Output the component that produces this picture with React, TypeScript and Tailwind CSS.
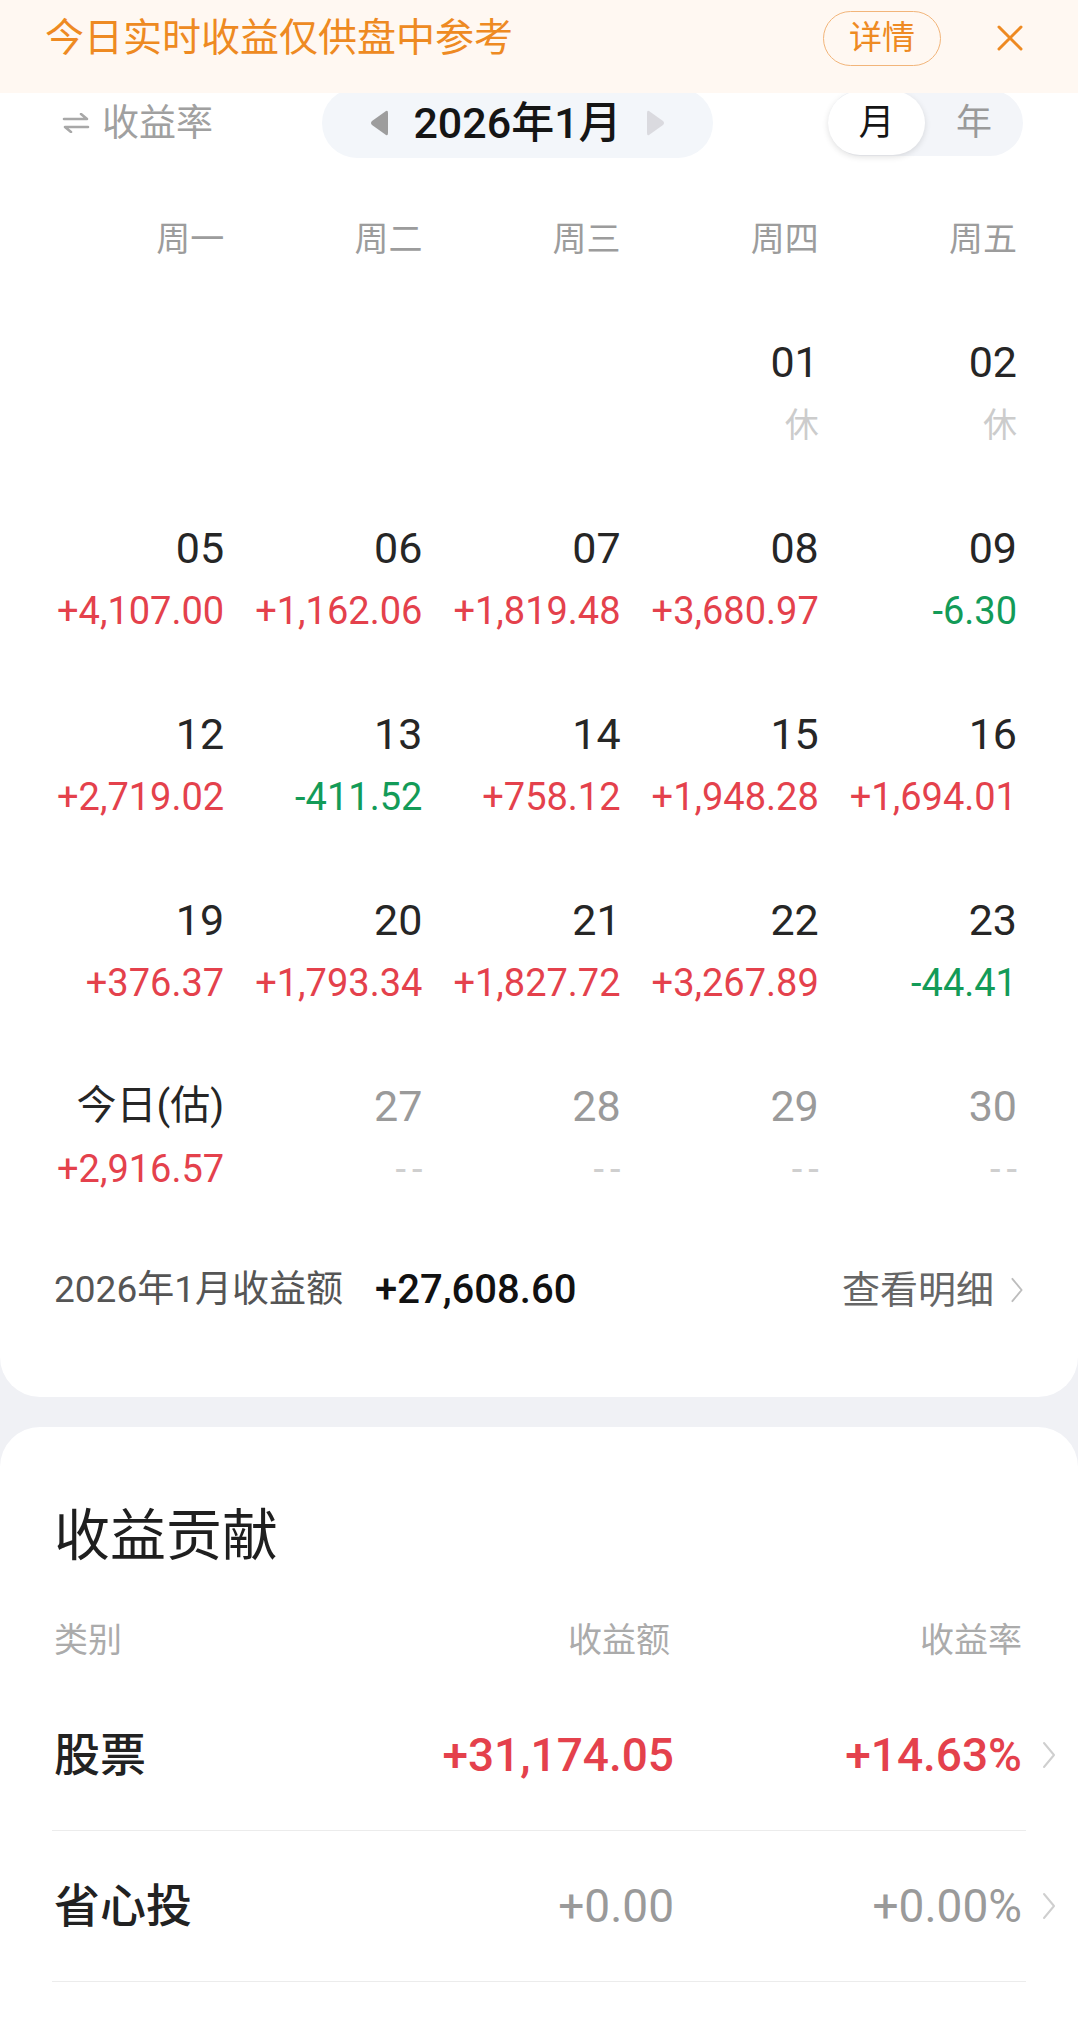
type Cell = { d: string; v?: string; tone: 'up' | 'down' | 'rest' | 'future' | 'today' } | null;

const weeks = ['周一', '周二', '周三', '周四', '周五'];

const rows: Cell[][] = [
  [null, null, null, { d: '01', v: '休', tone: 'rest' }, { d: '02', v: '休', tone: 'rest' }],
  [
    { d: '05', v: '+4,107.00', tone: 'up' },
    { d: '06', v: '+1,162.06', tone: 'up' },
    { d: '07', v: '+1,819.48', tone: 'up' },
    { d: '08', v: '+3,680.97', tone: 'up' },
    { d: '09', v: '-6.30', tone: 'down' },
  ],
  [
    { d: '12', v: '+2,719.02', tone: 'up' },
    { d: '13', v: '-411.52', tone: 'down' },
    { d: '14', v: '+758.12', tone: 'up' },
    { d: '15', v: '+1,948.28', tone: 'up' },
    { d: '16', v: '+1,694.01', tone: 'up' },
  ],
  [
    { d: '19', v: '+376.37', tone: 'up' },
    { d: '20', v: '+1,793.34', tone: 'up' },
    { d: '21', v: '+1,827.72', tone: 'up' },
    { d: '22', v: '+3,267.89', tone: 'up' },
    { d: '23', v: '-44.41', tone: 'down' },
  ],
  [
    { d: '今日(估)', v: '+2,916.57', tone: 'today' },
    { d: '27', v: '--', tone: 'future' },
    { d: '28', v: '--', tone: 'future' },
    { d: '29', v: '--', tone: 'future' },
    { d: '30', v: '--', tone: 'future' },
  ],
];

const contributions = [
  { name: '股票', amount: '+31,174.05', rate: '+14.63%', up: true },
  { name: '省心投', amount: '+0.00', rate: '+0.00%', up: false },
];

const Chevron = ({ className }: { className: string }) => (
  <svg viewBox="0 0 14 28" className={className} fill="none">
    <path d="M2 2 L12 14 L2 26" stroke="currentColor" strokeWidth="2" strokeLinecap="round" strokeLinejoin="round" />
  </svg>
);

const DayCell = ({ cell }: { cell: Cell }) => {
  if (!cell) return <div />;
  const dayColor = cell.tone === 'future' ? 'text-[#9a9a9a]' : 'text-[#262626]';
  let sub = <div className="mt-[13px] h-[50px] text-[34px] leading-[50px] text-[#cccccc]">{cell.v}</div>;
  if (cell.tone === 'up' || cell.tone === 'today' || cell.tone === 'down') {
    sub = (
      <div className={`mt-[13px] h-[50px] text-[38px] leading-[50px] ${cell.tone === 'down' ? 'text-[#139b58]' : 'text-[#e4414c]'}`}>
        {cell.v}
      </div>
    );
  }
  if (cell.tone === 'future') {
    sub = (
      <div className="mt-[13px] -mr-[6px] h-[50px] text-[38px] leading-[50px] tracking-[6px] text-[#cfcfcf]">{cell.v}</div>
    );
  }
  return (
    <div className="flex flex-col items-end">
      <div className={`h-[50px] leading-[50px] ${dayColor} ${cell.tone === 'today' ? 'text-[40px]' : 'text-[43px]'}`}>{cell.d}</div>
      {sub}
    </div>
  );
};

const App = () => {
  return (
    <div className="relative min-h-screen w-full bg-[#f0f1f5] font-['Roboto','Noto_Sans_CJK_SC',sans-serif]">
      {/* notice banner */}
      <div className="absolute left-0 right-0 top-0 z-10 h-[93px] bg-[#fff8f2]">
        <div className="flex h-[76px] items-center pl-[45px] pr-[54px]">
          <span className="flex-1 text-[39px] leading-none text-[#ee8a22]">今日实时收益仅供盘中参考</span>
          <div className="flex h-[55px] w-[118px] items-center justify-center rounded-full border-[1.5px] border-[#f2b57a] text-[33px] text-[#ee8a22]">
            详情
          </div>
          <svg viewBox="0 0 28 28" className="ml-[55px] h-[28px] w-[28px]" fill="none">
            <path d="M3 3 L25 25 M25 3 L3 25" stroke="#ee8a22" strokeWidth="3" strokeLinecap="round" />
          </svg>
        </div>
      </div>

      {/* calendar card */}
      <div className="rounded-b-[40px] bg-white pt-[88px] pb-[82px]">
        <div className="flex h-[70px] items-center pl-[62px] pr-[55px]">
          <div className="flex w-[152px] items-center text-[#a0a0a0]">
            <svg viewBox="0 0 28 20" className="h-[20px] w-[28px]" fill="none">
              <path d="M2 6 H25 L19 1" stroke="#a8a8a8" strokeWidth="2.6" strokeLinecap="round" strokeLinejoin="round" />
              <path d="M26 14 H3 L9 19" stroke="#a8a8a8" strokeWidth="2.6" strokeLinecap="round" strokeLinejoin="round" />
            </svg>
            <span className="ml-[12px] text-[37px] leading-none">收益率</span>
          </div>
          <div className="ml-[108px] flex h-[70px] w-[391px] items-center justify-center rounded-full bg-[#f3f6fa]">
            <svg viewBox="0 0 20 30" className="h-[30px] w-[20px]">
              <path d="M17 3 Q19 2 19 5 V25 Q19 28 17 27 L3 17 Q1 15 3 13 Z" fill="#9d9d9d" />
            </svg>
            <span className="mx-[24px] text-[43px] font-medium leading-none text-[#151515]">2026年1月</span>
            <svg viewBox="0 0 20 30" className="h-[30px] w-[20px]">
              <path d="M3 3 Q1 2 1 5 V25 Q1 28 3 27 L17 17 Q19 15 17 13 Z" fill="#dadadf" />
            </svg>
          </div>
          <div className="ml-auto flex h-[66px] w-[195px] items-center rounded-full bg-[#f3f5f9]">
            <div className="flex h-[64px] w-[97px] items-center justify-center rounded-full bg-white text-[36px] text-[#151515] shadow-[0_2px_6px_rgba(0,0,0,0.12)]">
              月
            </div>
            <div className="flex flex-1 items-center justify-center text-[36px] text-[#9a9a9a]">年</div>
          </div>
        </div>

        <div className="pl-[26px] pr-[61px]">
          <div className="mt-[51px] grid h-[60px] grid-cols-5 items-center">
            {weeks.map((w) => (
              <div key={w} className="text-right text-[34px] leading-none text-[#9c9c9c]">
                {w}
              </div>
            ))}
          </div>
          <div className="mt-[68px] flex flex-col gap-[73px]">
            {rows.map((row, i) => (
              <div key={i} className="grid grid-cols-5">
                {row.map((cell, j) => (
                  <DayCell key={j} cell={cell} />
                ))}
              </div>
            ))}
          </div>
        </div>

        <div className="mt-[71px] flex h-[50px] items-center pl-[54px] pr-[54px]">
          <span className="text-[37px] text-[#555]">2026年1月收益额</span>
          <span className="ml-[32px] text-[40px] font-medium text-[#111]">+27,608.60</span>
          <span className="ml-auto text-[38px] text-[#666]">查看明细</span>
          <Chevron className="ml-[16px] h-[26px] w-[14px] text-[#bdbdbd]" />
        </div>
      </div>

      {/* contribution card */}
      <div className="mt-[30px] rounded-t-[40px] bg-white pt-[74px] pb-[37px]">
        <div className="h-[70px] pl-[54px] text-[56px] leading-[70px] text-[#1f1f1f]">收益贡献</div>
        <div className="mt-[44px] flex h-[50px] items-center pl-[54px] pr-[56px] text-[34px] text-[#ababab]">
          <span className="flex-1">类别</span>
          <span className="w-[300px] text-right">收益额</span>
          <span className="w-[352px] text-right">收益率</span>
        </div>
        <div className="mt-[15px]">
          {contributions.map((c) => (
            <div key={c.name}>
              <div className="flex h-[150px] items-center pl-[54px] pr-[22px] text-[46px]">
                <span className="flex-1 font-medium text-[#222]">{c.name}</span>
                <span className={`w-[304px] text-right ${c.up ? 'font-medium text-[#e4414c]' : 'text-[#9a9a9a]'}`}>{c.amount}</span>
                <span className={`w-[348px] text-right ${c.up ? 'font-medium text-[#e4414c]' : 'text-[#9a9a9a]'}`}>{c.rate}</span>
                <div className="flex w-[34px] justify-end">
                  <Chevron className="h-[28px] w-[14px] text-[#cfcfcf]" />
                </div>
              </div>
              <div className="mx-[52px] h-px bg-[#ececec]" />
            </div>
          ))}
        </div>
      </div>
    </div>
  );
};

export default App;
